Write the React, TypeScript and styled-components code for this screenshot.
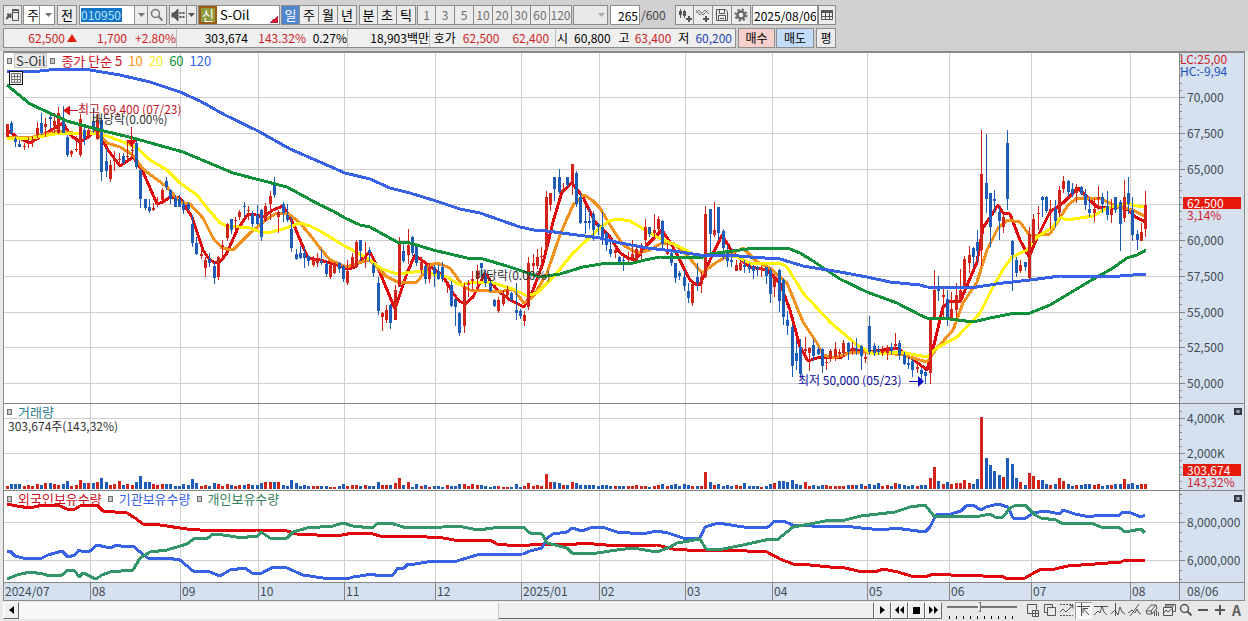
import React, { useState } from "react";
import styled, { createGlobalStyle } from "styled-components";

const GlobalStyle = createGlobalStyle`
  *, *::before, *::after { box-sizing: border-box; }
  html, body { margin: 0; padding: 0; }
  body, button, input, select {
    font-family: "Noto Sans CJK KR", "Liberation Sans", sans-serif;
    font-size: 12px;
    line-height: 16px;
  }
`;

/* ---------- data ---------- */

const FIRST_X = 6.5;
const STEP = 4.314;
const UP = "#d2231a";
const DOWN = "#1e5cb8";

/* Daily bars: colour, then high, body top, body bottom, low in thirds of a unit below "base". */
const CANDLES: { base: number; rows: string }[] = [
  {
    base: 50,
    rows: `r222,222,262,262 b214,220,248,256 b262,267,275,290 b270,281,290,292 r280,289,292,299 r262,278,281,294
    r258,271,274,290 r217,233,254,263 b190,220,248,254 r203,222,232,262 b190,202,206,236 r188,213,228,248
    r172,190,250,252 b168,212,250,250 b254,262,314,322 r299,304,313,320 r258,296,300,306 r192,206,314,320
    b224,240,268,285 r226,240,256,268 b175,212,240,250 r192,210,268,270 b204,210,365,392 b294,334,362,380
    r330,344,388,396 r304,325,332,362 r310,326,330,345 b310,318,340,342 r272,318,322,330 r272,300,303,318
    b270,280,350,356 b356,360,448,474 b447,448,474,480 b448,470,482,488 r460,474,480,484 r442,460,464,470
    r414,420,450,452 b381,392,412,420 b416,420,446,462 b434,444,470,472 b436,446,470,472 b450,462,480,492
    b455,462,476,484 b494,521,578,590 b560,580,613,614 r600,612,618,628 r622,630,654,682 b610,626,640,650
    b636,648,684,702 r618,620,680,690 r570,586,590,624 r520,522,564,572 b508,508,540,552 r500,510,514,540
    r480,487,500,510 b456,468,472,500 r468,480,484,510 b484,492,522,532 b466,494,522,524 b478,480,560,572
    r460,468,512,516 r422,438,462,510 b381,402,434,444 r480,486,502,548 b457,462,490,516 b462,496,510,516
    b500,536,594,606 b598,612,628,630 b588,608,624,628 b592,608,624,655 b614,618,634,648 r618,628,646,650
    r610,624,640,650`,
  },
  {
    base: 150,
    rows: `b298,332,340,346 b334,342,372,380 r338,344,382,388 r336,340,368,372 b336,338,356,370 b345,348,388,396
    r330,362,398,406 r308,322,350,356 r270,276,350,354 b270,270,302,334 r275,318,328,354 b290,300,310,335
    b338,346,368,380 b380,398,484,496 r486,488,500,542 r466,480,510,518 b462,464,518,536 r404,420,510,510
    r262,275,410,412 b280,304,332,338 r237,284,316,342 b258,262,308,318 b280,282,340,348 r320,336,360,372
    b345,348,388,402 r338,350,388,400 b345,352,372,412 b345,362,388,390 b336,350,388,396 r396,405,409,430
    b392,406,468,472 b448,448,472,528 b486,490,548,558 r398,412,528,548 r390,398,406,440 r362,388,394,420
    r346,362,386,420 b338,340,354,380 b360,378,398,412 b390,400,424,426 b448,450,467,470 r442,450,484,490
    r420,434,462,468 r408,420,436,445 b426,428,450,454 b400,480,488,510 b476,484,498,508 r484,496,514,528
    r320,340,470,480 r312,338,348,380 r296,322,348,356 r290,318,322,360 r124,140,300,312 r128,130,164,184
    b80,82,116,152 b57,80,125,132 r98,118,125,130 b80,82,104,110 r42,42,104,134 b64,70,162,170
    b130,142,218,222 b168,214,218,252 b175,214,218,236 b182,192,240,272 b220,222,230,256 b186,230,262,286
    b245,250,284,304`,
  },
  {
    base: 180,
    rows: `b186,206,222,232 r196,210,220,235 b228,232,248,252 b230,240,244,272 r216,236,240,256 r180,222,236,240
    r192,206,248,250 r188,200,220,240 r118,142,180,200 b140,142,162,172 r102,150,160,180 r108,118,148,154
    b120,122,192,210 r190,210,222,226 b214,220,250,258 b248,250,294,308 b272,280,288,300 b270,290,318,332
    b310,334,354,370 r306,312,370,378 b248,290,308,332 r276,290,312,340 r78,102,292,294 b88,88,162,230
    r66,150,164,172 b80,82,160,180 b148,152,205,240 b195,212,242,262 b206,240,245,260 r240,256,272,273
    r240,250,270,272 b240,256,262,280 b250,258,266,278 b256,258,272,298 b258,262,266,288 r258,262,270,290
    b260,260,288,312 b264,270,342,368 r282,296,322,352 b266,270,362,396 b294,300,410,436 b394,421,438,466
    b432,440,558,590 b480,520,544,570 b478,502,582,594 r472,508,512,540 r500,504,518,572 b476,496,528,544
    b500,508,522,525 b505,508,558,578 r530,545,549,570 r508,512,536,545 r485,508,532,542 r508,516,522,535
    r480,490,518,528 b486,490,516,540 r486,506,512,524 b474,505,510,524 b495,497,528,570 r522,530,536,548
    b408,438,516,524 b490,498,518,528 b498,510,516,526 r498,512,518,528 r495,500,520,540 b488,500,512,522
    r460,492,498,510 b480,488,524,540 b516,524,552,556 b530,548,554,568 b538,542,570,592 r550,560,568,580`,
  },
  {
    base: 110,
    rows: `b775,780,792,815 b780,786,798,822 r620,625,790,822 r480,540,625,628 b498,528,542,572 r530,556,562,622
    b540,566,622,648 r545,596,626,628 r520,556,600,620 r478,540,566,575 r438,446,536,540 r408,436,458,490
    b412,414,442,470 b360,396,422,455 r60,192,420,468 b72,220,268,308 b248,250,350,412 b240,266,272,310
    b290,306,332,390 r310,322,350,368 b60,98,268,300 b390,392,434,542 b442,450,488,500 r450,465,484,490
    b456,457,470,482 r350,372,504,512 r312,328,398,405 r288,308,312,360 b258,260,270,322 b258,260,302,310
    r270,298,304,358 b270,298,332,350 r228,240,308,320 r198,212,238,250 b210,212,246,262 b220,236,252,262
    r222,232,250,280 b228,232,252,256 b238,252,284,300 b262,298,310,322 r268,298,310,335 r228,260,266,300
    b248,260,282,308 b242,288,314,330 r268,296,314,338 b260,262,300,308 b270,276,342,422 r210,262,324,336
    b200,250,282,312 b262,300,375,392 b360,372,390,420 r340,366,392,392 r242,284,358,382`,
  },
];

const bars = CANDLES.flatMap(({ base, rows }) =>
  rows.trim().split(/\s+/).map((row) => {
    const [high, top, bottom, low] = row.slice(1).split(",").map((v) => Math.round(base + Number(v) / 3));
    return { color: row[0] === "r" ? UP : DOWN, high, top, bottom, low };
  })
).map((bar, i) => ({ ...bar, x: Math.round(FIRST_X + STEP * i) }));

const VOLUMES = [
  3, 5, 5, 5, 3, 4, 3, 5, 4, 6, 6, 5, 4, 5, 8, 3, 4, 9, 6, 6, 6, 7, 11, 7, 4, 5, 8, 4, 5, 4, 7, 13, 7, 7, 5, 4, 5, 5, 5,
  3, 3, 5, 4, 10, 6, 3, 4, 3, 6, 5, 3, 5, 4, 3, 4, 4, 5, 4, 4, 6, 7, 7, 7, 7, 4, 3, 9, 6, 3, 4, 3, 3, 3, 3, 3, 2, 2, 3,
  5, 3, 4, 4, 3, 4, 3, 3, 7, 4, 4, 4, 6, 11, 4, 7, 2, 5, 3, 4, 2, 3, 3, 2, 4, 3, 3, 5, 5, 3, 5, 4, 4, 3, 2, 3, 3, 2, 2,
  2, 5, 2, 3, 6, 3, 4, 3, 15, 7, 7, 6, 4, 4, 7, 6, 4, 4, 4, 4, 3, 4, 4, 3, 3, 3, 3, 3, 3, 4, 3, 3, 2, 3, 4, 5, 3, 4, 5,
  3, 5, 4, 3, 3, 3, 17, 7, 4, 5, 3, 4, 3, 4, 3, 6, 3, 3, 3, 2, 3, 5, 6, 8, 8, 7, 9, 5, 4, 7, 3, 4, 3, 4, 4, 3, 3, 3, 3,
  4, 4, 4, 5, 3, 5, 4, 6, 3, 4, 3, 6, 5, 4, 3, 4, 3, 4, 4, 11, 22, 8, 5, 7, 5, 6, 6, 9, 6, 5, 10, 72, 31, 24, 18, 14,
  12, 31, 25, 11, 7, 4, 16, 13, 9, 9, 5, 4, 5, 11, 8, 5, 3, 4, 4, 5, 5, 4, 5, 3, 4, 4, 5, 5, 10, 5, 6, 4, 5, 5,
];

const MA5 =
  "7,130 17,137 30,143 43,135 63,123 70,135 80,142 88,137 97,130 108,150 120,166 133,157 143,172 157,204 163,202 170,197 180,198 192,217 203,250 209,259 215,263 221,261 227,253 237,230 248,214 256,215 263,217 273,210 283,206 293,223 301,242 308,258 320,260 327,262 340,266 348,269 355,267 363,258 370,252 378,268 395,309 407,273 415,255 428,265 443,276 453,293 459,301 465,304 473,297 485,273 497,290 510,300 524,307 533,290 543,263 553,222 562,192 572,183 583,197 595,222 610,237 620,253 628,258 635,260 647,245 662,230 673,247 690,280 695,284 700,285 710,260 722,235 733,253 750,267 767,270 780,283 790,310 800,347 808,361 820,357 840,358 853,349 867,352 897,348 910,357 927,370 932,353 943,307 950,301 960,302 977,262 983,228 998,205 1003,213 1010,214 1020,240 1029,257 1037,238 1050,212 1063,203 1078,188 1097,207 1112,207 1127,209 1137,218 1146,222";
const MA10 =
  "7,138 33,137 60,131 80,134 97,132 107,143 120,147 133,155 143,169 167,187 180,202 190,204 203,218 213,238 222,248 233,250 250,233 267,219 275,214 283,213 290,215 300,223 310,235 320,248 330,260 347,267 358,263 370,260 387,277 400,283 417,282 430,265 437,263 450,268 463,286 470,290 477,290 500,292 513,289 524,303 533,297 547,273 560,235 573,205 584,195 592,200 600,208 610,225 623,245 637,253 650,250 660,244 673,243 687,255 702,273 717,262 733,253 743,248 757,262 770,268 787,283 803,322 817,343 823,355 833,358 850,353 880,352 903,355 927,362 937,348 953,330 963,303 977,282 987,250 998,228 1008,220 1020,222 1030,236 1040,235 1050,234 1060,218 1068,205 1077,198 1100,198 1117,207 1133,210 1146,217";
const MA20 =
  "7,139 33,138 60,133 80,134 97,133 110,137 123,142 137,148 150,160 167,170 180,183 197,195 208,209 220,223 227,226 250,228 258,231 267,233 283,229 300,223 310,226 320,231 343,245 367,258 382,269 397,274 423,271 437,275 447,277 460,285 473,282 493,283 513,289 527,296 537,293 557,273 573,253 600,228 609,221 617,219 630,221 657,237 680,247 700,258 717,253 737,257 750,263 780,263 787,267 803,293 830,322 857,345 873,354 900,352 927,357 937,348 957,337 980,313 993,287 1004,268 1012,257 1027,250 1037,237 1053,227 1060,217 1067,220 1093,216 1107,208 1127,203 1137,206 1146,207";
const MA60 =
  "7,85 30,104 67,121 100,130 133,138 183,152 207,162 233,173 260,180 287,187 320,205 333,211 345,218 360,225 370,227 397,242 410,243 433,250 467,258 483,259 507,266 540,277 560,274 583,267 607,263 633,263 645,260 660,257 700,258 710,254 733,251 755,248 773,248 790,249 800,253 813,261 840,279 867,292 897,303 920,315 927,318 950,319 973,322 990,318 1010,314 1030,313 1050,305 1070,293 1090,281 1113,268 1127,258 1137,255 1146,250";
const MA120 =
  "7,72 40,71 58,69 90,70 120,75 150,82 180,92 200,101 225,115 258,131 290,149 320,162 345,173 370,179 390,188 410,193 436,201 460,209 480,213 520,227 534,230 547,231 577,235 600,238 620,243 648,248 673,251 700,255 727,255 750,257 780,259 803,266 840,272 867,277 890,282 920,285 927,287 970,288 1003,283 1030,280 1060,276 1107,277 1146,274";

const FOREIGN =
  "7,504 17,506 30,508 43,505 60,506 67,509 75,509 80,506 97,505 103,511 127,513 135,518 143,524 160,525 187,529 213,531 257,530 287,531 297,534 337,536 353,533 370,533 383,537 410,536 443,538 460,541 490,540 497,544 517,546 543,544 570,545 583,543 617,546 657,545 673,549 700,551 727,550 767,552 780,559 793,564 810,565 830,567 845,568 858,571 875,572 883,569 898,572 911,576 925,577 933,574 968,576 975,575 991,577 1001,576 1008,579 1025,578 1041,569 1055,569 1068,566 1095,564 1121,562 1125,560 1136,561 1145,560";
const INSTITUTION =
  "7,551 10,551 15,556 23,558 42,558 48,555 62,551 68,557 75,555 79,550 83,552 90,551 97,545 110,548 117,545 125,547 133,546 140,552 148,558 167,558 180,560 193,571 210,572 220,576 230,570 245,568 252,573 262,573 273,567 287,568 303,575 323,578 347,579 353,577 373,574 378,576 393,575 398,568 404,568 408,564 415,564 427,562 457,561 477,555 523,554 530,551 542,548 547,538 553,534 567,532 572,528 582,531 590,528 602,527 617,532 630,533 647,533 657,531 668,533 683,538 700,538 705,527 718,523 750,528 768,527 775,521 783,521 793,525 830,527 845,526 861,528 883,530 895,528 925,532 930,527 935,517 938,514 951,514 961,511 966,506 973,505 981,510 986,507 998,504 1008,507 1013,518 1026,518 1033,513 1045,511 1060,514 1063,510 1075,514 1090,517 1098,515 1118,516 1123,512 1131,513 1141,517 1145,515";
const INDIVIDUAL =
  "7,579 17,575 30,572 43,574 50,576 62,575 68,570 75,571 79,577 83,573 96,579 102,575 110,572 133,570 140,558 150,552 167,550 187,544 195,538 208,538 213,534 223,535 243,538 252,536 257,537 261,532 270,538 287,538 293,532 307,528 333,526 343,523 353,526 372,528 377,524 390,523 407,528 443,527 458,526 478,530 493,528 523,527 530,533 542,534 547,543 567,548 572,553 597,553 617,550 633,548 657,552 670,547 677,543 700,539 706,549 723,549 743,545 770,539 777,540 793,527 810,524 830,520 845,520 861,516 895,512 910,507 925,505 934,516 961,516 975,517 990,514 995,517 1003,517 1010,508 1016,505 1025,505 1035,515 1041,518 1056,520 1063,524 1091,523 1101,527 1120,528 1125,532 1141,529 1145,533";

const MONTHS: [number, string][] = [
  [4, "2024/07"], [90, "08"], [180, "09"], [258, "10"], [344, "11"], [435, "12"], [521, "2025/01"],
  [599, "02"], [685, "03"], [772, "04"], [867, "05"], [949, "06"], [1031, "07"], [1130, "08"],
];

const PLOT_LEFT = 4;
const PLOT_WIDTH = 1175;
const xPct = (x: number) => `${((x - PLOT_LEFT) / PLOT_WIDTH) * 100}%`;

/* ---------- layout ---------- */

const Page = styled.div`
  display: flex;
  flex-direction: column;
  min-height: 100vh;
  background: #e8e8e8;
  color: #000;
`;
const Top = styled.header`
  display: flex;
  flex-direction: column;
  gap: 3px;
  padding: 5px 3px 3px;
  background: #d1d1d1;
`;
const Toolbar = styled.div`
  display: flex;
  height: 20px;
`;
const Group = styled.div<{ $gap?: number }>`
  display: flex;
  margin-right: ${(p) => p.$gap ?? 1}px;
`;
const ToolButton = styled.button<{ $w?: number; $on?: boolean; $dim?: boolean }>`
  display: flex;
  align-items: center;
  justify-content: center;
  width: ${(p) => p.$w ?? 19}px;
  height: 20px;
  padding: 0;
  white-space: nowrap;
  font-size: ${(p) => (p.$dim ? 12 : 13)}px;
  border: 1px solid #8c8c8c;
  & + & { border-left-width: 0; }
  background: ${(p) => (p.$on ? "#4f86cd" : "#ececec")};
  color: ${(p) => (p.$on ? "#fff" : p.$dim ? "#6e6e6e" : "#000")};
`;
const TextBox = styled.input<{ $w: number; $align?: string }>`
  width: ${(p) => p.$w}px;
  height: 20px;
  padding: 0 1px;
  border: 1px solid #8c8c8c;
  border-radius: 0;
  background: #fff;
  text-align: ${(p) => p.$align ?? "left"};
  outline: none;
`;
const CodeBox = styled.div`
  display: flex;
  align-items: center;
  width: 55px;
  padding: 0 1px;
  border: 1px solid #8c8c8c;
  border-right: 0;
  background: #fff;
`;
const CodeInput = styled.input`
  width: 41px;
  height: 14px;
  padding: 0;
  border: 0;
  background: #1474c8;
  color: #b9e6ff;
  line-height: 14px;
  outline: none;
`;
const PeriodSelect = styled.select<{ $w: number }>`
  appearance: none;
  width: ${(p) => p.$w}px;
  height: 20px;
  padding: 0 3px;
  border: 1px solid #8c8c8c;
  border-radius: 0;
  color: #000;
  font-size: 13px;
  background: linear-gradient(#8c8c8c, #8c8c8c) right 14px top / 1px 100% no-repeat, #fff;
  &:disabled { background: #e9e9e9; opacity: 1; }
`;
const SelectWrap = styled.div`
  position: relative;
  display: flex;
  svg { position: absolute; right: 3px; top: 8px; pointer-events: none; }
`;
const StockBox = styled.div`
  display: flex;
  width: 82px;
  border: 1px solid #8c8c8c;
  background: linear-gradient(135deg, transparent 50%, #d01830 50%) right 1px bottom 1px / 8px 8px no-repeat, #fff;
`;
const NewTag = styled.span`
  width: 18px;
  border: 2px solid #9a5c14;
  background: #8f9a3c;
  color: #fff;
  font-size: 13px;
  line-height: 14px;
  text-align: center;
`;
const StockName = styled.span`
  padding-left: 3px;
  font-size: 13px;
  line-height: 18px;
`;
const Total = styled.span`
  width: 35px;
  padding-left: 1px;
  color: #444;
  line-height: 20px;
`;
const QuoteCells = styled.div`
  display: flex;
  width: 733px;
  margin-right: 2px;
  border: 1px solid #8c8c8c;
  background: #efefef;
`;
const Cell = styled.div<{ $w: number }>`
  display: flex;
  align-items: center;
  justify-content: flex-end;
  width: ${(p) => p.$w}px;
  & + & { border-left: 1px solid #bdbdbd; }
`;
const Num = styled.span<{ $w: number; $c?: string }>`
  width: ${(p) => p.$w}px;
  color: ${(p) => p.$c ?? "#000"};
  text-align: right;
  white-space: nowrap;
`;
const TradeButton = styled.button<{ $w: number; $bg: string; $gap?: number }>`
  width: ${(p) => p.$w}px;
  height: 20px;
  margin-right: ${(p) => p.$gap ?? 1}px;
  padding: 0;
  border: 1px solid #8c8c8c;
  background: ${(p) => p.$bg};
`;
const ChartFrame = styled.main`
  display: flex;
  flex: 1;
  flex-direction: column;
  margin: 0 3px;
  border: 1px solid #8a8a8a;
  border-top: 2px solid #8a8a8a;
`;
const Pane = styled.section<{ $h: number }>`
  display: flex;
  flex: ${(p) => p.$h} 1 ${(p) => p.$h}px;
  min-height: 0;
  border-bottom: 1px solid #868686;
`;
const Plot = styled.div`
  position: relative;
  flex: 1;
  background: #fff;
`;
const PlotSvg = styled.svg`
  position: absolute;
  inset: 0;
  width: 100%;
  height: 100%;
`;
const Scale = styled.div`
  position: relative;
  flex: 0 0 65px;
  background: #d5e1ee;
  color: #404a56;
`;
const ScaleText = styled.span<{ $tag?: boolean; $edge?: boolean; $c?: string }>`
  position: absolute;
  left: ${(p) => (p.$tag ? 4 : p.$edge ? 1 : 8)}px;
  right: ${(p) => (p.$tag ? 3 : 0)}px;
  padding-left: ${(p) => (p.$tag ? 4 : 0)}px;
  transform: translateY(-50%);
  background: ${(p) => (p.$tag ? "#e81a0c" : "transparent")};
  color: ${(p) => (p.$tag ? "#fff" : p.$c ?? "inherit")};
  line-height: 12px;
  white-space: nowrap;
`;
const CloseButton = styled.button`
  position: absolute;
  top: 4px;
  right: 2px;
  display: flex;
  width: 8px;
  height: 7px;
  padding: 0;
  border: 0;
  background: #2f3a46;
`;
const Legend = styled.div`
  position: absolute;
  top: 0;
  left: 3px;
  display: flex;
  align-items: center;
  gap: 3px;
  height: 15px;
`;
const Marker = styled.i`
  width: 5px;
  height: 6px;
  margin-right: 3px;
  border: 1px solid #6f6f6f;
  background: #c9c9c9;
`;
const LegendText = styled.span<{ $c: string }>`
  margin-right: 3px;
  color: ${(p) => p.$c};
  font-size: 13px;
  line-height: 14px;
  white-space: nowrap;
`;
const LegendName = styled.button`
  height: 15px;
  margin-left: -4px;
  padding: 0 1px;
  border: 1px solid #c4c4c4;
  background: #e9e9e9;
  color: #333;
  font-size: 13px;
  line-height: 13px;
`;
const TableButton = styled.button`
  position: absolute;
  top: 18px;
  left: 5px;
  display: flex;
  width: 14px;
  height: 14px;
  padding: 1px;
  border: 1px solid #111;
  background: #f4f4f4;
`;
const Note = styled.span<{ $c: string }>`
  position: absolute;
  transform: translateY(-50%);
  color: ${(p) => p.$c};
  line-height: 10px;
  white-space: nowrap;
`;
const VolumeNote = styled.p`
  position: absolute;
  top: 15px;
  left: 4px;
  margin: 0;
  color: #333;
  line-height: 14px;
`;
const TimeRow = styled.div`
  display: flex;
  height: 17px;
  background: #d5e1ee;
  color: #404a56;
`;
const TimePlot = styled.div`
  position: relative;
  flex: 1;
`;
const Month = styled.span`
  position: absolute;
  top: 0;
  bottom: 0;
  padding-left: 1px;
  border-left: 1px solid #868686;
  &:first-child { border-left: 0; }
`;
const LastDate = styled.span`
  flex: 0 0 65px;
  padding-left: 7px;
  border-left: 1px solid #868686;
`;
const BottomBar = styled.footer`
  display: flex;
  align-items: center;
  height: 21px;
  padding: 0 3px 3px;
`;
const ScrollButton = styled.button<{ $w?: number }>`
  display: flex;
  flex: 0 0 ${(p) => p.$w ?? 17}px;
  align-items: center;
  justify-content: center;
  height: 17px;
  padding: 0;
  border: 1px solid;
  border-color: #fff #6a6a6a #6a6a6a #fff;
  background: #f0f0f0;
`;
const Track = styled.div`
  display: flex;
  flex: 1;
  justify-content: flex-end;
  height: 17px;
  background: #f7f7f7;
`;
const Thumb = styled.div`
  width: 44%;
  border: 1px solid;
  border-color: #fff #6a6a6a #6a6a6a #c8c8c8;
  background: #efefef;
`;
const ZoomBox = styled.div`
  display: flex;
  flex-direction: column;
  justify-content: space-between;
  width: 70px;
  height: 17px;
  margin: 0 7px 0 5px;
`;
const ZoomRange = styled.input`
  appearance: none;
  width: 70px;
  height: 11px;
  margin: 0;
  background: linear-gradient(#777, #777) left 4px / 100% 2px no-repeat;
  &::-webkit-slider-thumb {
    appearance: none;
    width: 3px;
    height: 10px;
    border: 1px solid #777;
    border-left-color: #fff;
    background: #ddd;
  }
`;
const IconButton = styled.button<{ $on?: boolean }>`
  display: flex;
  flex: 0 0 17px;
  align-items: center;
  justify-content: center;
  height: 17px;
  padding: 0;
  border: 0;
  background: ${(p) => (p.$on ? "#fafafa" : "transparent")};
  box-shadow: ${(p) => (p.$on ? "inset 1px 1px 0 #a0a0a0" : "none")};
  color: #5c5c5c;
  font-size: 14px;
`;

/* ---------- icons ---------- */

const Icon = ({ children, size = 14, stroke = "#555" }: { children: React.ReactNode; size?: number; stroke?: string }) => (
  <svg width={size} height={size} viewBox="0 0 14 14" fill="none" stroke={stroke} strokeWidth="1" aria-hidden="true">
    {children}
  </svg>
);
const DownArrow = ({ color = "#777" }: { color?: string }) => (
  <svg width="7" height="4" viewBox="0 0 7 4" aria-hidden="true">
    <path d="M0 0h7L3.500 4z" fill={color} />
  </svg>
);

const TOOL_ICONS: { label: string; node: React.ReactNode; on?: boolean }[] = [
  { label: "차트 추가", node: <path d="M7 10.500H1.500v-9h9v5M6.500 7.500h6v6h-6zM9.500 7.500v6M6.500 10.500h6" /> },
  { label: "창 겹치기", node: <><path d="M4.500 9.500h-3v-8h8v3" /><path d="M4.500 4.500h8v8h-8z" /></> },
  { label: "범위 표시", node: <><path d="M0 1.500h13M0 12.500h13" strokeDasharray="2 1" /><path d="M0 9l3-3 3 3 4-4 3-2M10 2.500h3v3" /></> },
  { label: "십자선", node: <path d="M0 3.500h13M4.500 0v13M6 5l6 7M6 10V5.500h5" />, on: true },
  { label: "수평선", node: <path d="M0 3.500h14M0 12l4-4 2 2 2-7 2 6 3 3" /> },
  { label: "수직선", node: <path d="M4.500 0v13M0 11l4-4 3 5 2-8 2 5 3 2" /> },
  { label: "추세선", node: <path d="M2 13L11 1M0 10l4-3 3 3 2-4 2 4 2 1" /> },
  { label: "지우개", node: <><path d="M1 8l5-6h5l1 3-5 6H2zM1 8h5l5-6M6 8l1 3" /><path d="M9.500 9v4M11.500 7v6M13.500 9v4" /></> },
  { label: "복사", node: <><path d="M3.500 4V1.500h10v7H11" /><path d="M1.500 4.500h9v8h-9zM2 10l2-3 2 2 4-3M4 3h8" /></> },
  { label: "돋보기", node: <><circle cx="5.500" cy="5.500" r="4" strokeWidth="1.500" /><path d="M8.500 8.500l4 4" strokeWidth="2" /></> },
  { label: "축소", node: <path d="M2 7h10" strokeWidth="2" /> },
  { label: "확대", node: <path d="M2 7h10M7 2v10" strokeWidth="2" /> },
];

/* ---------- chart parts ---------- */

type PlotProps = { top: number; height: number; grid: number[]; children: React.ReactNode };
const Drawing = ({ top, height, grid, children }: PlotProps) => (
  <PlotSvg viewBox={`${PLOT_LEFT} ${top} ${PLOT_WIDTH} ${height}`} preserveAspectRatio="none" aria-hidden="true">
    <g stroke="#cfcfcf" shapeRendering="crispEdges">
      {grid.map((y) => (
        <line key={y} x1={PLOT_LEFT} x2={PLOT_LEFT + PLOT_WIDTH} y1={y + 0.5} y2={y + 0.5} />
      ))}
      {MONTHS.slice(1).map(([x]) => (
        <line key={x} x1={x + 0.5} x2={x + 0.5} y1={top} y2={top + height} />
      ))}
    </g>
    {children}
  </PlotSvg>
);
const Line = ({ points, color }: { points: string; color: string }) => (
  <polyline
    points={points}
    fill="none"
    stroke={color}
    strokeWidth="3"
    strokeLinejoin="round"
    shapeRendering="crispEdges"
    vectorEffect="non-scaling-stroke"
  />
);

type ScaleProps = { top: number; height: number; labels: [number, string][]; minor: number; children?: React.ReactNode };
const PriceScale = ({ top, height, labels, minor, children }: ScaleProps) => {
  const ticks: number[] = [];
  const start = labels[0][0];
  for (let k = -20; k < 60; k++) {
    const y = start + k * minor;
    if (y > top && y < top + height) ticks.push(Math.round(y));
  }
  return (
    <Scale>
      <PlotSvg viewBox={`0 ${top} 65 ${height}`} preserveAspectRatio="none" aria-hidden="true">
        <g stroke="#868686" shapeRendering="crispEdges">
          <line x1="0.5" x2="0.5" y1={top} y2={top + height} />
          {ticks.map((y) => <line key={y} x1="0" x2="3" y1={y + 0.5} y2={y + 0.5} />)}
          {labels.map(([y]) => <line key={y} x1="0" x2="6" y1={y + 0.5} y2={y + 0.5} />)}
        </g>
      </PlotSvg>
      {labels.map(([y, text]) => (
        <ScaleText key={text} style={{ top: `${((y - top) / height) * 100}%` }}>{text}</ScaleText>
      ))}
      {children}
    </Scale>
  );
};

const MAIN = { top: 53, height: 350 };
const VOL = { top: 404, height: 86 };
const HOLD = { top: 491, height: 91 };
const yPct = (y: number, pane: { top: number; height: number }) => `${((y - pane.top) / pane.height) * 100}%`;

const PERIODS = ["일", "주", "월", "년"];
const UNITS = ["분", "초", "틱"];
const MINUTES = ["1", "3", "5", "10", "20", "30", "60", "120"];
const RED = "#cf1f1f";
const BLUE = "#2142b4";

export default function App() {
  const [period, setPeriod] = useState("일");
  return (
    <Page>
      <GlobalStyle />
      <Top>
        <Toolbar>
          <Group>
            <ToolButton aria-label="패널 접기">
              <Icon><path d="M6.500 1.500h6v11h-6zM6.500 4.500h6M7 2.500h6" /><path d="M0 11l4-4M1 6.500h3.500V10" strokeWidth="2" /></Icon>
            </ToolButton>
          </Group>
          <Group $gap={2}>
            <SelectWrap>
              <PeriodSelect $w={32} aria-label="종목 구분" defaultValue="주"><option>주</option></PeriodSelect>
              <DownArrow />
            </SelectWrap>
          </Group>
          <Group $gap={2}><ToolButton $w={20}>전</ToolButton></Group>
          <Group $gap={2}>
            <CodeBox><CodeInput aria-label="종목코드" defaultValue="010950" /></CodeBox>
            <ToolButton $w={14} aria-label="종목 목록"><DownArrow /></ToolButton>
            <ToolButton aria-label="종목 검색"><Icon stroke="#777"><circle cx="5.500" cy="5.500" r="4" strokeWidth="1.500" /><path d="M8.500 8.500l4 4" strokeWidth="2" /></Icon></ToolButton>
          </Group>
          <Group>
            <ToolButton $w={18} aria-label="음성">
              <Icon><path d="M1 5h2l4-4v12L3 9H1z" fill="#555" /><path d="M9.500 4v6M12.500 4v6" strokeDasharray="2 2" strokeWidth="2" /></Icon>
            </ToolButton>
            <ToolButton $w={10} aria-label="음성 설정"><DownArrow color="#555" /></ToolButton>
          </Group>
          <Group><StockBox><NewTag>신</NewTag><StockName>S-Oil</StockName></StockBox></Group>
          <Group $gap={2}>
            {PERIODS.map((p) => (
              <ToolButton key={p} $on={p === period} onClick={() => setPeriod(p)}>{p}</ToolButton>
            ))}
          </Group>
          <Group>{UNITS.map((u) => <ToolButton key={u}>{u}</ToolButton>)}</Group>
          <Group>{MINUTES.map((m) => <ToolButton key={m} $dim $w={m.length > 2 ? 22 : 19}>{m}</ToolButton>)}</Group>
          <Group $gap={2}>
            <SelectWrap>
              <PeriodSelect $w={35} disabled aria-label="간격" />
              <DownArrow color="#aaa" />
            </SelectWrap>
          </Group>
          <Group $gap={0}><TextBox $w={30} $align="right" aria-label="표시 개수" defaultValue="265" /><Total>/600</Total></Group>
          <Group $gap={1}>
            <ToolButton aria-label="차트 유형">
              <Icon><path d="M2.500 1v9M6.500 2v8" /><path d="M1 3h3v4H1zM5 3h3v5H5z" fill="#555" stroke="none" /><path d="M11 8v6M8 11h6" strokeWidth="2" /></Icon>
            </ToolButton>
            <ToolButton aria-label="지표 추가">
              <Icon><path d="M0 5l3-3 4 5 5-5M0 2l4 5 5-5 4 4" stroke="#777" /><path d="M10 8v6M7 11h6" strokeWidth="2" /></Icon>
            </ToolButton>
            <ToolButton aria-label="저장">
              <Icon><path d="M1.500 1.500h9l2 2v9h-11zM4.500 1.500v4h5v-4M3.500 12.500v-5h7v5M5 10.500h4" /></Icon>
            </ToolButton>
            <ToolButton aria-label="설정">
              <Icon stroke="#666"><circle cx="7" cy="7" r="3.500" strokeWidth="2.500" /><circle cx="7" cy="7" r="5.500" strokeWidth="2" strokeDasharray="2.160 2.160" /></Icon>
            </ToolButton>
          </Group>
          <Group>
            <TextBox $w={66} aria-label="날짜" defaultValue="2025/08/06" />
            <ToolButton $w={18} aria-label="달력">
              <Icon><path d="M1.500 2.500h11v9h-11zM5.500 5v7M9.500 5v7M2 8.500h10" /><path d="M1 3.500h12" strokeWidth="3" /></Icon>
            </ToolButton>
          </Group>
        </Toolbar>
        <Toolbar>
          <QuoteCells>
            <Cell $w={172}>
              <Num $w={60} $c={RED}>62,500</Num>
              <svg width="14" height="10" viewBox="0 0 14 10" aria-hidden="true"><path d="M2 9h10L7 1z" fill="#e0200c" /></svg>
              <Num $w={48} $c={RED}>1,700</Num>
              <Num $w={49} $c={RED}>+2.80%</Num>
            </Cell>
            <Cell $w={171}>
              <Num $w={69}>303,674</Num><Num $w={58} $c={RED}>143.32%</Num><Num $w={41}>0.27%</Num>
            </Cell>
            <Cell $w={82}><Num $w={80}>18,903백만</Num></Cell>
            <Cell $w={126}>
              <Num $w={26}>호가</Num><Num $w={44} $c={RED}>62,500</Num><Num $w={50} $c={RED}>62,400</Num>
              <Num $w={6} />
            </Cell>
            <Cell $w={180}>
              <Num $w={12}>시</Num><Num $w={43}>60,800</Num><Num $w={19}>고</Num><Num $w={42} $c={RED}>63,400</Num>
              <Num $w={18}>저</Num><Num $w={43} $c={BLUE}>60,200</Num><Num $w={3} />
            </Cell>
          </QuoteCells>
          <TradeButton $w={37} $bg="#f7cfcb">매수</TradeButton>
          <TradeButton $w={38} $bg="#c3dcf7" $gap={2}>매도</TradeButton>
          <TradeButton $w={20} $bg="#ececec">평</TradeButton>
        </Toolbar>
      </Top>

      <ChartFrame>
        <Pane $h={351}>
          <Plot>
            <Drawing {...MAIN} grid={[97, 133, 169, 204, 240, 276, 312, 347, 383]}>
              <Line points={MA5} color="#e0060c" />
              <Line points={MA10} color="#f2921a" />
              <Line points={MA20} color="#fff500" />
              <g shapeRendering="crispEdges">
                {bars.map((b, i) => (
                  <g key={i} fill={b.color}>
                    <rect x={b.x} y={b.high} width="1" height={Math.max(1, b.low - b.high)} />
                    <rect x={b.x - 1} y={b.top} width="3" height={Math.max(1, b.bottom - b.top)} />
                  </g>
                ))}
              </g>
              <Line points={MA60} color="#109038" />
              <Line points={MA120} color="#3862e6" />
              <path d="M63 110.500l7-5v10z" fill="#e0060c" />
              <path d="M68 110.500h10M131.500 127v14" stroke="#c81a2a" />
              <path d="M126 140h11l-5.500 7z" fill="#e0060c" />
              <path d="M909 381.500h10" stroke="#0c0cc8" />
              <path d="M918 376v11l6-5.500z" fill="#0c0cc8" />
            </Drawing>
            <Note $c="#c01428" style={{ left: xPct(78), top: yPct(109, MAIN) }}>최고 69,400 (07/23)</Note>
            <Note $c="#333" style={{ left: xPct(92), top: yPct(119, MAIN) }}>배당락(0.00%)</Note>
            <Note $c="#333" style={{ left: xPct(475), top: yPct(275, MAIN) }}>배당락(0.00%)</Note>
            <Note $c="#0c0c9c" style={{ left: xPct(798), top: yPct(380, MAIN) }}>최저 50,000 (05/23)</Note>
            <Legend>
              <Marker /><LegendName>S-Oil</LegendName><Marker />
              <LegendText $c="#c8101c">종가 단순 5</LegendText>
              <LegendText $c="#f2921a">10</LegendText>
              <LegendText $c="#f5ec1c">20</LegendText>
              <LegendText $c="#109038">60</LegendText>
              <LegendText $c="#3862e6">120</LegendText>
            </Legend>
            <TableButton aria-label="데이터 표">
              <svg width="10" height="10" viewBox="0 0 10 10" stroke="#777" fill="none" aria-hidden="true"><path d="M.5.5h9v9h-9zM.5 3.500h9M.5 6.500h9M3.500.5v9M6.500.5v9" /></svg>
            </TableButton>
          </Plot>
          <PriceScale
            {...MAIN}
            minor={7.15}
            labels={[[97, "70,000"], [133, "67,500"], [169, "65,000"], [240, "60,000"], [276, "57,500"], [312, "55,000"], [347, "52,500"], [383, "50,000"]]}
          >
            <ScaleText $edge $c="#d01c2c" style={{ top: yPct(59, MAIN) }}>LC:25,00</ScaleText>
            <ScaleText $edge $c="#1c50b8" style={{ top: yPct(71, MAIN) }}>HC:-9,94</ScaleText>
            <ScaleText $tag style={{ top: yPct(203, MAIN) }}>62,500</ScaleText>
            <ScaleText $c="#d01c2c" style={{ top: yPct(215, MAIN) }}>3,14%</ScaleText>
          </PriceScale>
        </Pane>
        <Pane $h={87}>
          <Plot>
            <Drawing {...VOL} grid={[418, 453]}>
              <g shapeRendering="crispEdges">
                {bars.map((b, i) => (
                  <rect key={i} x={b.x - 1} y={489 - VOLUMES[i]} width="3" height={VOLUMES[i]} fill={b.color} />
                ))}
              </g>
            </Drawing>
            <Legend><Marker /><LegendText $c="#2b8090">거래량</LegendText></Legend>
            <VolumeNote>303,674주(143,32%)</VolumeNote>
          </Plot>
          <PriceScale {...VOL} minor={7} labels={[[418, "4,000K"], [453, "2,000K"]]}>
            <ScaleText $tag style={{ top: yPct(470, VOL) }}>303,674</ScaleText>
            <ScaleText $c="#d01c2c" style={{ top: yPct(482, VOL) }}>143,32%</ScaleText>
            <CloseButton aria-label="거래량 닫기"><svg width="8" height="7" viewBox="0 0 8 7" stroke="#fff" aria-hidden="true"><path d="M2.500 2l3 3M5.500 2l-3 3" /></svg></CloseButton>
          </PriceScale>
        </Pane>
        <Pane $h={92}>
          <Plot>
            <Drawing {...HOLD} grid={[522, 560]}>
              <Line points={FOREIGN} color="#e0060c" />
              <Line points={INSTITUTION} color="#3862e6" />
              <Line points={INDIVIDUAL} color="#34946a" />
            </Drawing>
            <Legend>
              <Marker /><LegendText $c="#c8101c">외국인보유수량</LegendText>
              <Marker /><LegendText $c="#3862e6">기관보유수량</LegendText>
              <Marker /><LegendText $c="#34805a">개인보유수량</LegendText>
            </Legend>
          </Plot>
          <PriceScale {...HOLD} minor={9.5} labels={[[522, "8,000,000"], [560, "6,000,000"]]}>
            <CloseButton aria-label="보유수량 닫기"><svg width="8" height="7" viewBox="0 0 8 7" stroke="#fff" aria-hidden="true"><path d="M2.500 2l3 3M5.500 2l-3 3" /></svg></CloseButton>
          </PriceScale>
        </Pane>
        <TimeRow>
          <TimePlot>
            {MONTHS.map(([x, text]) => <Month key={x} style={{ left: xPct(x) }}>{text}</Month>)}
          </TimePlot>
          <LastDate>08/06</LastDate>
        </TimeRow>
      </ChartFrame>

      <BottomBar>
        <ScrollButton $w={16} aria-label="왼쪽으로"><svg width="5" height="8" viewBox="0 0 5 8"><path d="M5 0v8L0 4z" /></svg></ScrollButton>
        <Track><Thumb /></Track>
        <ScrollButton aria-label="오른쪽으로"><svg width="5" height="8" viewBox="0 0 5 8"><path d="M0 0v8l5-4z" /></svg></ScrollButton>
        <ScrollButton aria-label="뒤로"><svg width="9" height="8" viewBox="0 0 9 8"><path d="M4 0v8L0 4zM9 0v8L5 4z" /></svg></ScrollButton>
        <ScrollButton aria-label="정지"><svg width="7" height="7" viewBox="0 0 7 7"><path d="M0 0h7v7H0z" /></svg></ScrollButton>
        <ScrollButton aria-label="앞으로"><svg width="9" height="8" viewBox="0 0 9 8"><path d="M0 0v8l4-4zM5 0v8l4-4z" /></svg></ScrollButton>
        <ZoomBox>
          <ZoomRange type="range" aria-label="재생 속도" min={0} max={100} defaultValue={47} />
          <svg width="70" height="3" viewBox="0 0 70 3" aria-hidden="true">
            {Array.from({ length: 10 }, (_, i) => <rect key={i} x={2 + i * 7} width="1" height="3" />)}
          </svg>
        </ZoomBox>
        {TOOL_ICONS.map(({ label, node, on }) => (
          <IconButton key={label} aria-label={label} $on={on}><Icon>{node}</Icon></IconButton>
        ))}
        <IconButton aria-label="글꼴"><b>A</b></IconButton>
      </BottomBar>
    </Page>
  );
}
